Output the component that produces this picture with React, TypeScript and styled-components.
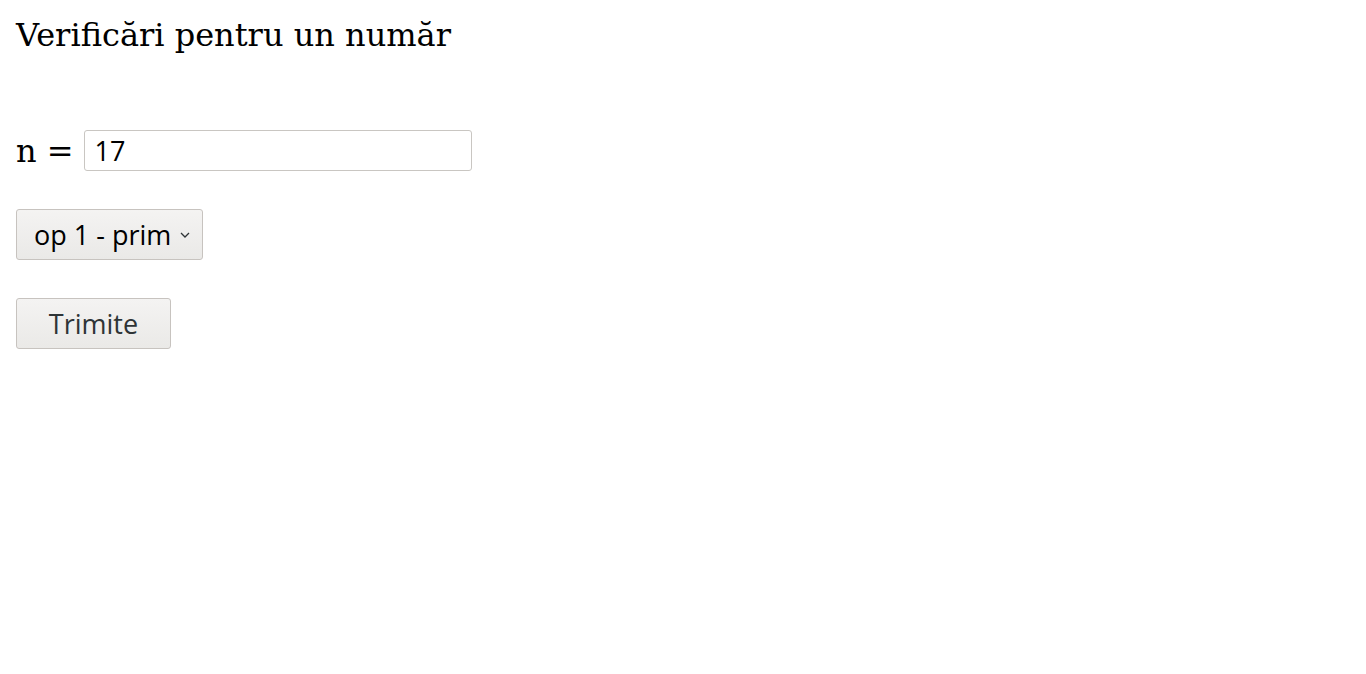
import React from "react";
import styled, { createGlobalStyle } from "styled-components";

const Global = createGlobalStyle`
  html, body { margin: 0; padding: 0; background: #fff; }
  body { font-family: "DejaVu Serif", serif; color: #000; }
`;

const Page = styled.div`
  padding: 16px;
  display: flex;
  flex-direction: column;
  align-items: flex-start;
`;

const Title = styled.h1`
  margin: 0;
  font-family: "DejaVu Serif", serif;
  font-weight: normal;
  font-size: 32px;
  line-height: 38px;
`;

const Form = styled.form`
  display: flex;
  flex-direction: column;
  align-items: flex-start;
  gap: 38px;
  margin-top: 76px;
`;

const Row = styled.div`
  display: flex;
  align-items: center;
  gap: 10px;
`;

const Label = styled.label`
  font-family: "DejaVu Serif", serif;
  font-size: 32px;
`;

const Input = styled.input`
  box-sizing: border-box;
  width: 388px;
  height: 41px;
  border: 1px solid #c9c6c2;
  border-radius: 3px;
  padding: 0 10px;
  font-family: "Open Sans", sans-serif;
  font-size: 27px;
  color: #000;
  background: #fff;
  outline: none;
`;

const controlBase = `
  box-sizing: border-box;
  height: 51px;
  border: 1px solid #c7c3bf;
  border-radius: 3px;
  background: linear-gradient(#f4f3f2, #eae9e7);
  font-family: "Open Sans", sans-serif;
  font-size: 27px;
  color: #2e3436;
  display: flex;
  align-items: center;
`;

const Select = styled.div`
  ${controlBase}
  width: 187px;
  padding: 0 10px 0 17px;
  color: #000;
  gap: 8px;
`;

const Chevron = styled.svg`
  width: 12px;
  height: 12px;
  flex-shrink: 0;
`;

const Button = styled.button`
  ${controlBase}
  width: 155px;
  justify-content: center;
  padding: 0;
`;

export default function App() {
  return (
    <>
      <Global />
      <Page>
        <Title>Verificări pentru un număr</Title>
        <Form onSubmit={(e) => e.preventDefault()}>
          <Row>
            <Label htmlFor="n">n =</Label>
            <Input id="n" defaultValue="17" />
          </Row>
          <Select>
            <span>op 1 - prim</span>
            <Chevron viewBox="0 0 12 12">
              <path d="M2 4 L6 8 L10 4" fill="none" stroke="#2e3436" strokeWidth="1.3" />
            </Chevron>
          </Select>
          <Button type="submit">Trimite</Button>
        </Form>
      </Page>
    </>
  );
}
